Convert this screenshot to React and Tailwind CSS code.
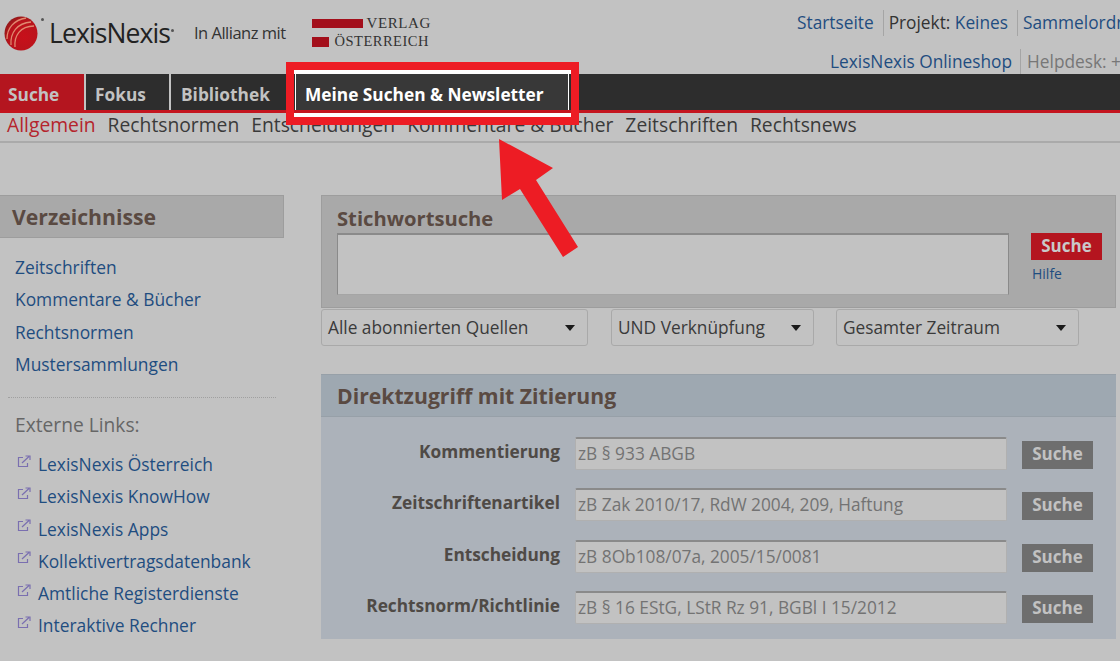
const sans = { fontFamily: '"Open Sans", sans-serif' };
const serif = { fontFamily: '"Liberation Serif", serif' };

const SIDE_LINKS = ['Zeitschriften', 'Kommentare & Bücher', 'Rechtsnormen', 'Mustersammlungen'];
const EXT_LINKS = [
  'LexisNexis Österreich',
  'LexisNexis KnowHow',
  'LexisNexis Apps',
  'Kollektivertragsdatenbank',
  'Amtliche Registerdienste',
  'Interaktive Rechner',
];
const SUB_TABS = ['Rechtsnormen', 'Entscheidungen', 'Kommentare & Bücher', 'Zeitschriften', 'Rechtsnews'];
const CITES = [
  ['Kommentierung', 'zB § 933 ABGB'],
  ['Zeitschriftenartikel', 'zB Zak 2010/17, RdW 2004, 209, Haftung'],
  ['Entscheidung', 'zB 8Ob108/07a, 2005/15/0081'],
  ['Rechtsnorm/Richtlinie', 'zB § 16 EStG, LStR Rz 91, BGBl I 15/2012'],
];

const ExtIcon = () => (
  <svg width="14" height="13" viewBox="0 0 14 13" fill="none" stroke="#7a6fb0" strokeWidth="1.2" className="shrink-0 mt-[-6px]">
    <path d="M6 2.5H1.5v9h9V8" />
    <path d="M5 8l7-6.5M8.5 1H13v4" />
  </svg>
);

const Select = ({ label, width }) => (
  <div className={`${width} h-[37px] bg-[#c2c2c2] border border-[#a9a9a9] rounded-[3px] flex items-center justify-between pl-[6px] pr-[12px] text-[17.3px] text-[#3a3a3a]`}>
    <span>{label}</span>
    <span className="w-0 h-0 border-l-[5px] border-r-[5px] border-t-[6px] border-l-transparent border-r-transparent border-t-[#1a1a1a]" />
  </div>
);

const App = () => {
  return (
    <div className="relative w-[1120px] h-[661px] overflow-hidden bg-[#c2c2c2]" style={sans}>
      {/* header */}
      <div className="h-[74px] flex justify-between">
        <div className="flex items-start pl-[4px] pt-[15px]">
          <svg width="34" height="35" viewBox="0 0 34 35" className="shrink-0 mt-[1px]">
            <defs>
              <radialGradient id="ball" cx="0.6" cy="0.6" r="0.65">
                <stop offset="0" stopColor="#c8101a" />
                <stop offset="0.75" stopColor="#b8141c" />
                <stop offset="1" stopColor="#8f1a1a" />
              </radialGradient>
            </defs>
            <ellipse cx="17" cy="17.5" rx="16.5" ry="17" fill="url(#ball)" />
            <path d="M3 23C3 12 10 4 22 2M7 29C6 17 13 7 27 6M11 31C10 20 16 10 30 10" fill="none" stroke="#e08a70" strokeWidth="1.3" />
          </svg>
          <span className="ml-[3px] mt-[3px] w-[3px] h-[3px] rounded-full bg-[#555]" />
          <span className="ml-[5px] mt-[1px] text-[26.5px] leading-[34px] tracking-[-0.9px] text-[#222]">LexisNexis</span>
          <span className="ml-[1px] mt-[14px] w-[3px] h-[3px] rounded-full bg-[#555]" />
          <span className="ml-[20px] mt-[8px] text-[16.5px] leading-[20px] tracking-[-0.5px] text-[#333]">In Allianz mit</span>
          <div className="ml-[26px] mt-[1px] w-[120px]">
            <div className="flex items-center h-[15px]">
              <span className="w-[51px] h-[9px] bg-[#a30f1b]" />
              <span className="ml-[4px] text-[15px] leading-[15px] tracking-[0.6px] text-[#333]" style={serif}>VERLAG</span>
            </div>
            <div className="flex items-center h-[15px] mt-[3px]">
              <span className="w-[17px] h-[10px] bg-[#a30f1b]" />
              <span className="ml-[6px] text-[14.5px] leading-[15px] tracking-[0.5px] text-[#333]" style={serif}>ÖSTERREICH</span>
            </div>
          </div>
        </div>
        <div className="w-[323px] shrink-0 overflow-hidden whitespace-nowrap text-[17.3px] text-[#1f4d80]">
          <div className="flex h-[26px] mt-[10px] items-center">
            <span className="pr-[9px] border-r border-[#a5a5a5] leading-[26px]">Startseite</span>
            <span className="pl-[5px] pr-[9px] border-r border-[#a5a5a5] leading-[26px]"><span className="text-[#333]">Projekt:</span> Keines</span>
            <span className="pl-[5px] leading-[26px]">Sammelordner</span>
          </div>
          <div className="flex h-[26px] mt-[13px] items-center ml-[33px]">
            <span className="pr-[8px] border-r border-[#a5a5a5] leading-[26px]">LexisNexis Onlineshop</span>
            <span className="pl-[6px] text-[#777] leading-[26px]">Helpdesk: +43</span>
          </div>
        </div>
      </div>

      {/* main nav */}
      <div className="h-[39px] bg-[#2d2d2d] border-b-[3px] border-[#c4151f] flex text-[17.3px] font-bold text-[#c2c2c2]">
        <div className="w-[86px] bg-[#b4151f] pl-[8px] leading-[41px] border-r-[2px] border-[#c2c2c2]">Suche</div>
        <div className="w-[85px] pl-[9px] leading-[41px] border-r-[2px] border-[#c2c2c2]">Fokus</div>
        <div className="w-[115px] pl-[10px] leading-[41px]">Bibliothek</div>
        <div className="ml-[9px] w-[274px] pl-[9px] leading-[41px] bg-[#383838] text-white border-x border-white">Meine Suchen &amp; Newsletter</div>
      </div>

      {/* sub nav */}
      <div className="h-[30px] border-b-2 border-[#aaa] flex text-[19.3px] leading-[24px] text-[#3a3a3a]">
        <span className="ml-[7px] text-[#b5242c]">Allgemein</span>
        {SUB_TABS.map(t => <span key={t} className="ml-[12px]">{t}</span>)}
      </div>

      <div className="flex pt-[52px]">
        {/* sidebar */}
        <div className="w-[284px] shrink-0">
          <div className="h-[43px] bg-[#a9a9a9] border-y border-r border-[#9d9d9d] pl-[12px] text-[21.2px] font-bold leading-[41px] text-[#5a4a42]">Verzeichnisse</div>
          <div className="pl-[15px] pt-[13px] text-[17.4px] text-[#1f4d80]">
            {SIDE_LINKS.map(l => <div key={l} className="h-[32.3px] leading-[32px]">{l}</div>)}
          </div>
          <div className="mt-[17px] mx-[8px] border-t border-dotted border-[#a0a0a0]" />
          <div className="pl-[15px] pt-[12px] text-[19.2px] leading-[30px] text-[#666]">Externe Links:</div>
          <div className="pl-[17px] pt-[8px] text-[17.4px] text-[#1f4d80]">
            {EXT_LINKS.map(l => (
              <div key={l} className="h-[32.2px] flex items-center gap-[7px]">
                <ExtIcon />
                <span>{l}</span>
              </div>
            ))}
          </div>
        </div>

        {/* content */}
        <div className="ml-[37px] w-[795px] shrink-0">
          <div className="h-[113px] bg-[#a9a9a9] border border-[#9d9d9d] pl-[15px] pt-[9px]">
            <div className="text-[20.2px] font-bold leading-[26px] text-[#5a4a42]">Stichwortsuche</div>
            <div className="mt-[2px] flex items-start">
              <div className="w-[672px] h-[62px] bg-[#c2c2c2] border border-[#8a8a8a] border-t-2 border-b-[#a5a5a5]" />
              <div className="ml-[22px]">
                <div className="w-[71px] h-[27px] bg-[#b4151f] text-center text-[17px] font-bold leading-[26px] text-[#c9c9c9]">Suche</div>
                <div className="mt-[5px] ml-[1px] text-[14px] leading-[18px] text-[#1f4d80]">Hilfe</div>
              </div>
            </div>
          </div>
          <div className="flex mt-[1px]">
            <Select label="Alle abonnierten Quellen" width="w-[267px]" />
            <div className="ml-[23px]"><Select label="UND Verknüpfung" width="w-[203px]" /></div>
            <div className="ml-[22px]"><Select label="Gesamter Zeitraum" width="w-[243px]" /></div>
          </div>

          <div className="mt-[28px] h-[265px] bg-[#acb2ba]">
            <div className="h-[43px] bg-[#9ea8b1] border-y border-[#97a0a8] pl-[16px] text-[21.2px] font-bold leading-[41px] text-[#5a4a42]">Direktzugriff mit Zitierung</div>
            <div className="pt-[20px]">
              {CITES.map(([label, ph]) => (
                <div key={label} className="h-[51.3px] flex items-start">
                  <div className="w-[239px] text-right text-[17.3px] font-bold leading-[30px] text-[#4f4a46]">{label}</div>
                  <div className="ml-[15px] w-[432px] h-[33px] bg-[#c2c2c2] border border-[#b0b0b0] border-t-2 border-t-[#8a8a8a] rounded-[2px] pl-[2px] text-[17.3px] leading-[30px] text-[#737373] whitespace-nowrap">{ph}</div>
                  <div className="ml-[15px] mt-[4px] w-[71px] h-[28px] bg-[#6e6e6e] text-center text-[17px] font-bold leading-[26px] text-[#c2c2c2]">Suche</div>
                </div>
              ))}
            </div>
          </div>
        </div>
      </div>

      {/* annotation over the screenshot */}
      <div className="absolute left-[286px] top-[62px] w-[293px] h-[63px] border-[8px] border-[#ed1c24] pointer-events-none">
        <div className="h-[4px] bg-white" />
        <div className="h-[4px] bg-white mt-[39px]" />
      </div>
      <svg className="absolute left-[480px] top-[130px]" width="120" height="135" viewBox="0 0 120 135">
        <polygon points="19,9 73,38 56,50 98,117 83,127 40,59 22,70" fill="#ed1c24" />
      </svg>
    </div>
  );
};

export default App;
